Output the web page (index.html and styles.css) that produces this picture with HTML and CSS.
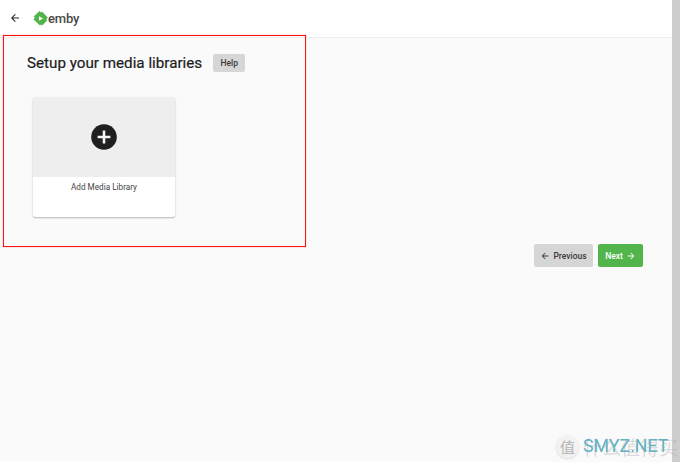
FILE: index.html
```html
<!DOCTYPE html>
<html lang="en">
<head>
<meta charset="utf-8">
<title>Setup your media libraries</title>
<link rel="stylesheet" href="styles.css">
</head>
<body>
<div class="app">
  <div class="main">
    <header class="topbar">
      <svg class="back" viewBox="0 0 24 24" width="12" height="12"><path d="M20 11H7.8l5.6-5.6L12 4l-8 8 8 8 1.4-1.4L7.8 13H20z"/></svg>
      <svg class="logo" viewBox="0 0 15 15" width="15" height="15"><path class="logo-mark" d="M6.5 0 8 1.5 9 .6l5.9 6.1-1.6 1.5 1.1 1.1-5.2 5.2-1.1-1.1-1.2 1.2L.4 8.2 2 6.7.7 5.6z"/><path class="logo-play" d="M6 5.2v4.6l4-2.3z"/></svg>
      <span class="brand">emby</span>
    </header>
    <section class="content">
      <div class="title-row">
        <h1 class="title">Setup your media libraries</h1>
        <a class="help">Help</a>
      </div>
      <div class="card">
        <div class="card-img">
          <svg viewBox="0 0 26 26" width="26" height="26"><circle class="plus-bg" cx="13" cy="13" r="12.8"/><path class="plus-fg" d="M11.7 6.6h2.6v5.1h5.1v2.6h-5.1v5.1h-2.6v-5.1H6.6v-2.6h5.1z"/></svg>
        </div>
        <div class="card-text">Add Media Library</div>
      </div>
      <div class="actions">
        <button class="btn btn-prev"><svg viewBox="0 0 24 24" width="10" height="10"><path d="M20 11H7.8l5.6-5.6L12 4l-8 8 8 8 1.4-1.4L7.8 13H20z"/></svg>Previous</button>
        <button class="btn btn-next">Next<svg viewBox="0 0 24 24" width="10" height="10"><path d="M4 11h12.2l-5.6-5.6L12 4l8 8-8 8-1.4-1.4 5.6-5.6H4z"/></svg></button>
      </div>
    </section>
  </div>
  <div class="scrollbar"></div>
</div>
<div class="highlight"></div>
<div class="watermark">
  <span class="wm-badge">值</span>
  <span class="wm-cn">什么值得买</span>
  <span class="wm-text">SMYZ.NET</span>
</div>
</body>
</html>
```
FILE: styles.css
```css
* { box-sizing: border-box; }
html, body { margin: 0; height: 100%; overflow: hidden; }
body { font-family: Roboto, "Liberation Sans", sans-serif; background: #fafafa; color: #1c1c1c; }
.app { display: flex; height: 462px; }
.main { flex: 1; min-width: 0; display: flex; flex-direction: column; }
.scrollbar { width: 8px; background: #cdcdcd; }
.topbar { height: 38px; background: #fff; border-bottom: 1px solid #ececec; display: flex; align-items: center; padding: 0 0 1px 9px; }
.back { fill: #222; margin-right: 12px; }
.logo { margin-right: 0; }
.logo-mark { fill: #52b54b; }
.logo-play { fill: #fff; }
.brand { font-size: 13px; font-weight: 500; color: #4a4a4a; letter-spacing: -.2px; }
.content { flex: 1; padding: 16px 29px 0 27px; }
.title-row { display: flex; align-items: center; gap: 11px; height: 18px; }
.title { margin: 0; font-size: 15.2px; font-weight: 400; -webkit-text-stroke: .2px #1c1c1c; line-height: 18px; color: #1c1c1c; }
.help { width: 32px; height: 18px; border-radius: 2px; background: #d6d6d6; color: #3a3a3a; font-size: 8.5px; font-weight: 500; display: flex; align-items: center; justify-content: center; }
.card { width: 142px; height: 120px; margin: 25px 0 0 6px; border-radius: 3px; overflow: hidden; background: #fff; box-shadow: 0 1px 2px rgba(0,0,0,.28); }
.card-img { height: 80px; background: #eee; display: flex; align-items: center; justify-content: center; }
.plus-bg { fill: #1f1f1f; }
.plus-fg { fill: #f4f4f4; }
.card-text { padding-top: 5px; text-align: center; font-size: 8.2px; line-height: 10px; color: #444; }
.actions { display: flex; justify-content: flex-end; gap: 5px; margin-top: 27px; }
.btn { height: 23px; border: 0; border-radius: 2px; padding: 0; font: 500 8.5px Roboto, "Liberation Sans", sans-serif; display: flex; align-items: center; justify-content: center; gap: 3px; }
.btn-prev { width: 59px; background: #d6d6d6; color: #3a3a3a; fill: #3a3a3a; }
.btn-next { width: 45px; background: #52b54b; color: #fff; fill: #fff; }
.highlight { position: absolute; left: 3px; top: 35px; width: 303px; height: 212px; border: 1px solid #f11; box-shadow: 0 0 1px rgba(255,0,0,.5); pointer-events: none; }
.watermark { position: absolute; left: 556px; top: 432px; width: 116px; height: 28px; display: flex; align-items: center; }
.wm-badge { width: 23px; height: 23px; border-radius: 50%; background: #f2f2f2; box-shadow: 0 1px 2px rgba(0,0,0,.12); color: #b5b5b5; font: 15px/23px "Noto Sans CJK SC", sans-serif; text-align: center; }
.wm-cn { position: absolute; left: 27px; top: 3px; color: rgba(170,170,170,.4); font: 19px/24px "Noto Sans CJK SC", sans-serif; white-space: nowrap; }
.wm-text { position: absolute; left: 27px; top: 3px; color: #62b0c2; font: 400 17.8px/22px Roboto, sans-serif; white-space: nowrap; }
```
